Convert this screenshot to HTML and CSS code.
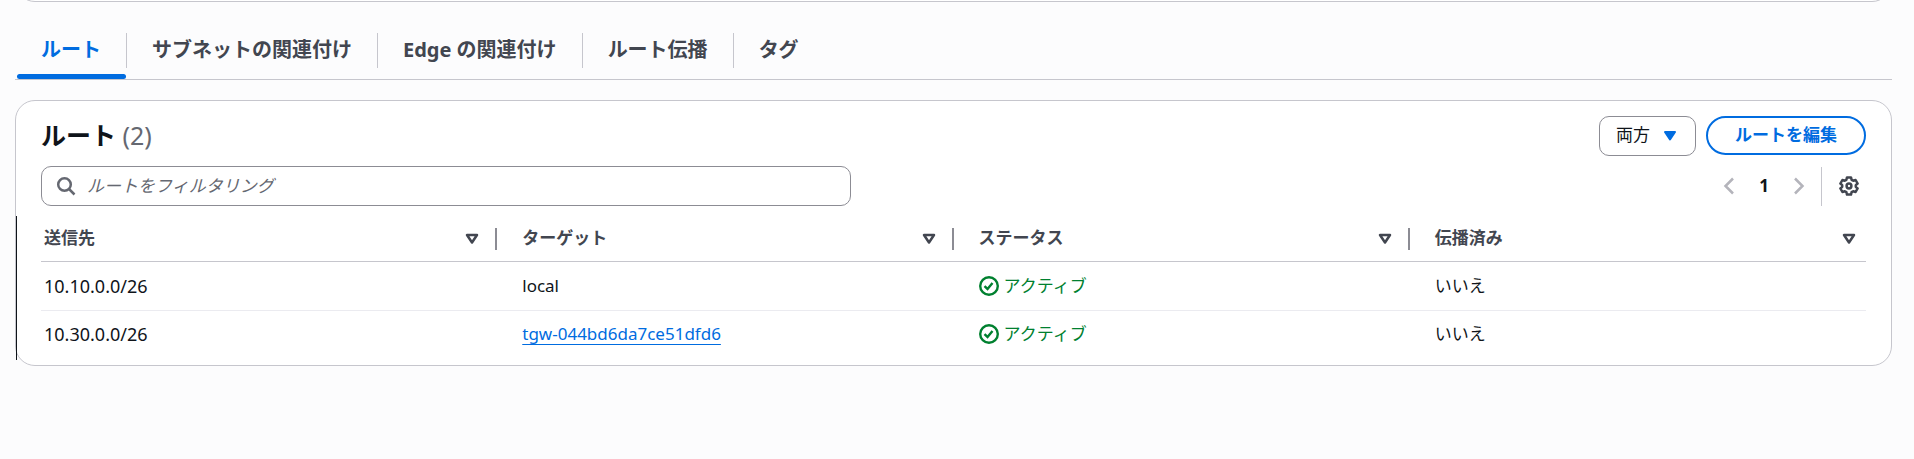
FILE: index.html
```html
<!DOCTYPE html>
<html lang="ja">
<head>
    <meta charset="UTF-8">
    <meta name="viewport" content="width=device-width, initial-scale=1.0">
    <title>ルートテーブル</title>
    <link rel="stylesheet" href="styles.css">
</head>
<body>
    <svg class="sprite" aria-hidden="true">
        <symbol id="icon-sort" viewBox="0 0 14 12">
            <path d="M2 2h10L7 9.5z" fill="none" stroke="currentColor" stroke-width="2.5" stroke-linejoin="round"/>
        </symbol>
        <symbol id="icon-success" viewBox="0 0 20 20">
            <circle cx="10" cy="10" r="8.8" fill="none" stroke="currentColor" stroke-width="2.4"/>
            <path d="M5.5 10.2l3 2.800 5-6" fill="none" stroke="currentColor" stroke-width="2.4"/>
        </symbol>
    </svg>

    <div class="summary-panel"></div>

    <nav class="tabs" role="tablist">
        <button type="button" class="tab active" role="tab" aria-selected="true">ルート</button>
        <button type="button" class="tab" role="tab">サブネットの関連付け</button>
        <button type="button" class="tab" role="tab">Edge の関連付け</button>
        <button type="button" class="tab" role="tab">ルート伝播</button>
        <button type="button" class="tab" role="tab">タグ</button>
    </nav>

    <section class="card">
        <div class="card-header">
            <h2>ルート <span class="count">(2)</span></h2>
            <div class="actions">
                <div class="select-box">
                    <select aria-label="表示するルート">
                        <option>両方</option>
                    </select>
                    <svg class="select-arrow" viewBox="0 0 14 12" aria-hidden="true">
                        <path d="M2 2h10L7 9.5z" fill="currentColor" stroke="currentColor" stroke-width="2" stroke-linejoin="round"/>
                    </svg>
                </div>
                <button type="button" class="btn">ルートを編集</button>
            </div>
        </div>

        <div class="toolbar">
            <div class="search-box">
                <svg class="search-icon" viewBox="0 0 20 20" aria-hidden="true">
                    <circle cx="8.5" cy="8.5" r="6.3" fill="none" stroke="currentColor" stroke-width="2.5"/>
                    <path d="M13 13l5.5 5.5" stroke="currentColor" stroke-width="2.5"/>
                </svg>
                <input type="text" placeholder="ルートをフィルタリング" aria-label="ルートをフィルタリング">
            </div>
            <div class="pagination">
                <button type="button" class="icon-btn page-arrow" aria-label="前のページ" disabled>
                    <svg viewBox="0 0 20 20"><path d="M14 2.5L6.5 10l7.5 7.5" fill="none" stroke="currentColor" stroke-width="2.5"/></svg>
                </button>
                <button type="button" class="page-number">1</button>
                <button type="button" class="icon-btn page-arrow" aria-label="次のページ" disabled>
                    <svg viewBox="0 0 20 20"><path d="M6 2.5l7.5 7.5L6 17.5" fill="none" stroke="currentColor" stroke-width="2.5"/></svg>
                </button>
                <span class="divider"></span>
                <button type="button" class="icon-btn settings" aria-label="設定">
                    <svg viewBox="0 0 20 20" fill="none" stroke="currentColor" stroke-width="2.5" stroke-linejoin="round">
                        <path d="M8 1.4h4l.6 2.4 1.6.9 2.4-.7 2 3.5-1.8 1.7v1.6l1.8 1.7-2 3.5-2.4-.7-1.6.9-.6 2.4H8l-.6-2.4-1.6-.9-2.4.7-2-3.5 1.8-1.7V9.2L1.4 7.5l2-3.5 2.4.7 1.6-.9z"/>
                        <circle cx="10" cy="10" r="2.4"/>
                    </svg>
                </button>
            </div>
        </div>

        <div class="table-wrapper">
            <table>
                <thead>
                    <tr>
                        <th scope="col"><div class="th-content"><span>送信先</span><svg class="sort"><use href="#icon-sort"/></svg></div></th>
                        <th scope="col"><div class="th-content"><span>ターゲット</span><svg class="sort"><use href="#icon-sort"/></svg></div></th>
                        <th scope="col"><div class="th-content"><span>ステータス</span><svg class="sort"><use href="#icon-sort"/></svg></div></th>
                        <th scope="col"><div class="th-content"><span>伝播済み</span><svg class="sort"><use href="#icon-sort"/></svg></div></th>
                    </tr>
                </thead>
                <tbody>
                    <tr>
                        <td class="cidr">10.10.0.0/26</td>
                        <td>local</td>
                        <td><span class="status"><svg><use href="#icon-success"/></svg>アクティブ</span></td>
                        <td>いいえ</td>
                    </tr>
                    <tr>
                        <td class="cidr">10.30.0.0/26</td>
                        <td><a href="#">tgw-044bd6da7ce51dfd6</a></td>
                        <td><span class="status"><svg><use href="#icon-success"/></svg>アクティブ</span></td>
                        <td>いいえ</td>
                    </tr>
                </tbody>
            </table>
        </div>
    </section>
</body>
</html>
```
FILE: styles.css
```css
* {
    box-sizing: border-box;
    margin: 0;
    padding: 0;
}

body {
    font-family: 'Noto Sans', 'Noto Sans CJK JP', sans-serif;
    font-size: 17px;
    line-height: 24px;
    color: #0f141a;
    background-color: #fcfcfd;
    padding: 0 22px 0 15px;
}

button, input, select {
    font: inherit;
    color: inherit;
    background: none;
    border: none;
}

button, select {
    cursor: pointer;
}

.sprite {
    display: none;
}

/* only the lower edge of this panel is in view */
.summary-panel {
    height: 40px;
    margin-top: -38px;
    background-color: white;
    border: 1px solid #c6c6cd;
    border-radius: 20px;
}

/* Tabs */
.tabs {
    display: flex;
    padding: 31px 0 11px 1px;
    border-bottom: 1px solid #c6c6cd;
}

.tab {
    position: relative;
    height: 35px;
    padding: 0 25px 2px;
    font-size: 20px;
    font-weight: bold;
    color: #424650;
    border-right: 1px solid #c6c6cd;
}

.tab:last-child {
    border-right: none;
}

.tab.active {
    color: #006ce0;
}

.tab.active::after {
    content: '';
    position: absolute;
    left: 1px;
    right: 0;
    bottom: -11px;
    height: 5px;
    border-radius: 3px;
    background-color: #006ce0;
}

/* Routes card */
.card {
    margin-top: 20px;
    padding-bottom: 5px;
    background-color: white;
    border: 1px solid #c6c6cd;
    border-radius: 20px;
}

.card-header {
    display: flex;
    justify-content: space-between;
    align-items: center;
    padding: 15px 25px 10px;
}

h2 {
    padding-bottom: 2px;
    font-size: 25px;
    line-height: 30px;
}

.count {
    font-weight: normal;
    color: #656871;
}

.actions {
    display: flex;
    gap: 10px;
}

.select-box {
    position: relative;
}

.select-box select {
    appearance: none;
    height: 40px;
    padding: 0 45px 2px 16px;
    border: 1px solid #8c8c94;
    border-radius: 10px;
}

.select-arrow {
    position: absolute;
    top: 14px;
    right: 19px;
    width: 14px;
    height: 12px;
    color: #006ce0;
    pointer-events: none;
}

.btn {
    height: 39px;
    padding: 0 27px 2px;
    font-weight: bold;
    color: #006ce0;
    border: 2px solid #006ce0;
    border-radius: 20px;
}

.toolbar {
    display: flex;
    justify-content: space-between;
    align-items: center;
    padding: 0 25px;
}

.search-box {
    position: relative;
    width: 810px;
    max-width: 60%;
}

.search-box input {
    width: 100%;
    height: 40px;
    padding: 0 16px 2px 45px;
    border: 1px solid #8c8c94;
    border-radius: 10px;
}

.search-box input::placeholder {
    font-style: italic;
    color: #656871;
    opacity: 1;
}

.search-icon {
    position: absolute;
    top: 10px;
    left: 15px;
    width: 20px;
    height: 20px;
    color: #656871;
}

.pagination {
    display: flex;
    align-items: center;
}

.icon-btn {
    display: flex;
    padding: 0 7px;
}

.icon-btn svg {
    width: 20px;
    height: 20px;
}

.page-arrow {
    color: #b4b4bb;
}

.page-number {
    width: 36px;
    font-weight: bold;
}

.divider {
    width: 1px;
    height: 39px;
    margin: 0 10px 0 5px;
    background-color: #c6c6cd;
}

.settings {
    color: #424650;
}

/* Table */
.table-wrapper {
    margin-top: 10px;
    padding: 0 25px 0 24px;
    border-left: 1px solid #0f141a;
}

table {
    width: 100%;
    table-layout: fixed;
    border-collapse: separate;
    border-spacing: 0;
}

th, td {
    height: 49px;
    padding: 0 0 0 25px;
    text-align: left;
}

th:first-child, td:first-child {
    padding-left: 3px;
}

th {
    height: 46px;
    color: #424650;
    border-bottom: 1px solid #c6c6cd;
}

tbody tr:first-child td {
    border-bottom: 1px solid #ebebf0;
}

tbody tr:last-child td {
    padding-bottom: 3px;
}

.th-content {
    display: flex;
    justify-content: space-between;
    align-items: center;
    height: 22px;
    padding-right: 16px;
    border-right: 2px solid #8c8c94;
}

.th-content span {
    padding-bottom: 2px;
}

th:last-child .th-content {
    padding-right: 10px;
    border-right: none;
}

.sort {
    width: 14px;
    height: 12px;
}

.cidr {
    font-size: 18px;
}

td a {
    color: #006ce0;
    text-underline-offset: 4px;
}

.status {
    display: flex;
    align-items: center;
    gap: 5px;
    color: #00802f;
}

.status svg {
    width: 20px;
    height: 20px;
}
```
